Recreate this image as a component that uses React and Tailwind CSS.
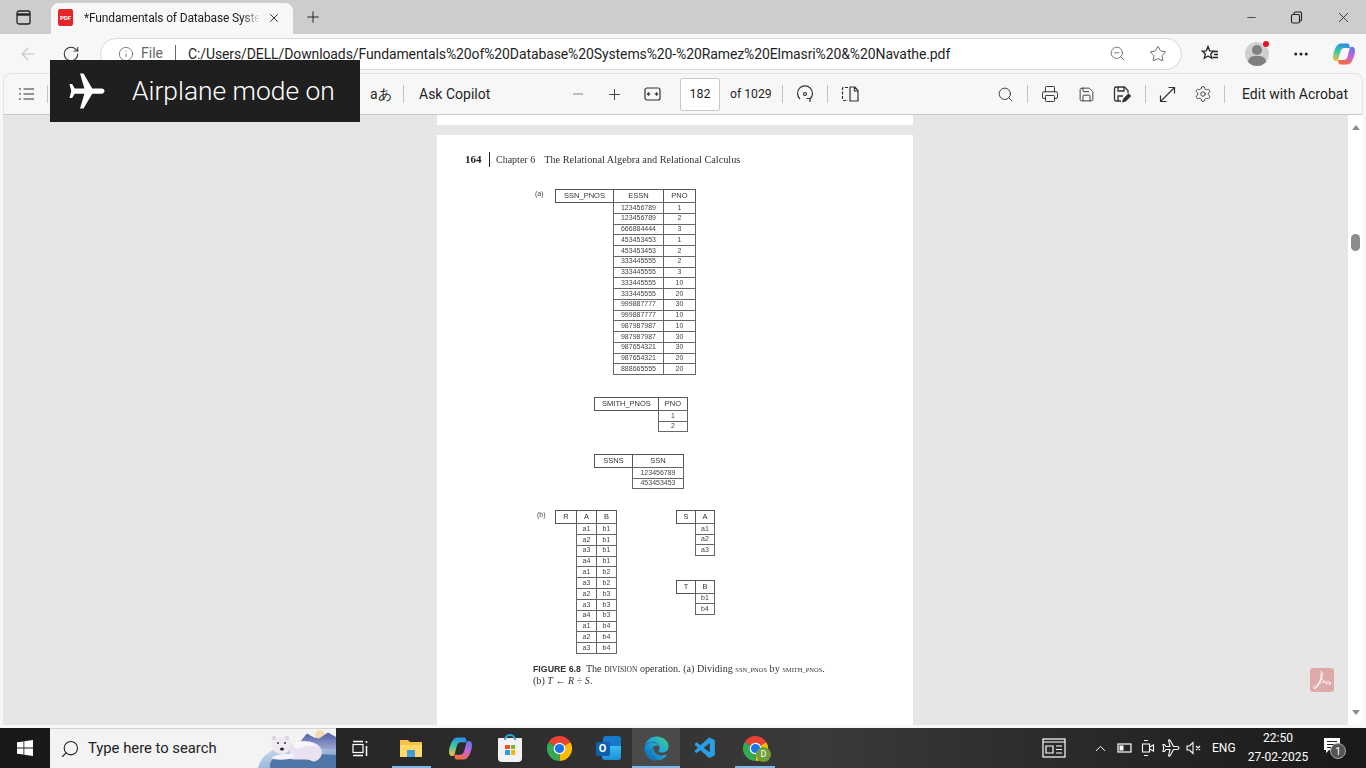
import { ArrowLeft, RotateCw, Info, ZoomOut, Star, Minus, Plus, Search, Printer, Save, Settings, X, ChevronUp, MoreHorizontal } from 'lucide-react';
import { MdAirplanemodeActive } from 'react-icons/md';
import { SiAdobeacrobatreader } from 'react-icons/si';
import { FaEdge } from 'react-icons/fa';
import { VscVscode } from 'react-icons/vsc';

const Sep = ({ className = '' }) => <div className={`w-px h-[18px] bg-[#c4c4c4] shrink-0 ${className}`}></div>;

const ChromeLogo = ({ size = 24 }) => (
  <svg width={size} height={size} viewBox="0 0 24 24">
    <path d="M12 12L1.6 6A12 12 0 0 1 22.4 6Z" fill="#ea4335" />
    <path d="M12 12L22.4 6A12 12 0 0 1 12 24Z" fill="#fbbc04" />
    <path d="M12 12L12 24A12 12 0 0 1 1.6 6Z" fill="#34a853" />
    <circle cx="12" cy="12" r="5.6" fill="#fff" />
    <circle cx="12" cy="12" r="4.4" fill="#1a73e8" />
  </svg>
);

const CopilotLogo = ({ size = 24 }) => (
  <svg width={size} height={size} viewBox="0 0 24 24">
    <defs>
      <linearGradient id="copA" x1="0.5" y1="0" x2="0.3" y2="1">
        <stop offset="0" stopColor="#2d8ee8" />
        <stop offset="0.5" stopColor="#3ec9a0" />
        <stop offset="1" stopColor="#f2c23e" />
      </linearGradient>
      <linearGradient id="copB" x1="0.7" y1="0" x2="0.4" y2="1">
        <stop offset="0" stopColor="#5f7be8" />
        <stop offset="0.5" stopColor="#c860d8" />
        <stop offset="1" stopColor="#f4703a" />
      </linearGradient>
    </defs>
    <path d="M9 1.500h6.500c1 0 1.600.6 1.900 1.500L18 6h-5.500C10 6 9 7.500 8.300 10L6.500 17c-.4 1.500-1.300 2.200-2.500 2.200-2 0-3-1.600-3-4.200 0-2.600 1-6 2.400-9C5 3 6.600 1.500 9 1.500z" fill="url(#copA)" />
    <path d="M15 22.500H8.500c-1 0-1.600-.6-1.900-1.500L6 18h5.500c2.500 0 3.500-1.500 4.200-4l1.800-7c.4-1.500 1.300-2.200 2.500-2.200 2 0 3 1.600 3 4.200 0 2.600-1 6-2.400 9-1.600 3-3.200 4.500-5.600 4.500z" fill="url(#copB)" />
  </svg>
);

const BearArt = () => (
  <svg width="78" height="40" viewBox="0 0 78 40" className="shrink-0">
    <defs>
      <linearGradient id="mountain" x1="0" y1="0" x2="0" y2="1">
        <stop offset="0" stopColor="#4f5ea6" />
        <stop offset="1" stopColor="#aeb6dc" />
      </linearGradient>
      <linearGradient id="hill" x1="0" y1="0" x2="1" y2="1">
        <stop offset="0" stopColor="#d5e3f2" />
        <stop offset="1" stopColor="#6b8fc4" />
      </linearGradient>
    </defs>
    <circle cx="62" cy="6" r="5" fill="#f3d9b0" />
    <path d="M36 20L49 4.500l7 4 5 1 9-6L78 8v16H36z" fill="url(#mountain)" />
    <path d="M0 40c1-9 8-17 20-21 16-2 40 0 58 2v19z" fill="url(#hill)" />
    <path d="M12 38c-1-7 6-12 16-13 16-1 34 0 50 1v14H16c-2 0-4-1-4-2z" fill="#4f76a8" />
    <path d="M32 14c8-3 22-3 28 2 5 4 5 10 1 14-3 3-7 3-9 1-6-1-14 0-20-1z" fill="#e9e2f0" />
    <path d="M34 14c8-2 20-2 26 3-6-1-16 0-22 3z" fill="#f8f5fb" />
    <path d="M14 16c0-5 4-8 9-8 6 0 10 3 10 8s-4 9-9 9c-6 0-10-4-10-9z" fill="#efe9f5" />
    <circle cx="16" cy="9" r="2.200" fill="#ddd4e6" />
    <circle cx="29" cy="9" r="2.200" fill="#ddd4e6" />
    <circle cx="20" cy="14" r="0.900" fill="#222" />
    <circle cx="27" cy="14" r="0.900" fill="#222" />
    <ellipse cx="24" cy="20" rx="2" ry="1.500" fill="#222" />
    <path d="M14 28c6-3 14-4 22-3l-1 4c-6 2-14 2-20 1z" fill="#f6f2fa" />
  </svg>
);

const ToolIcon = ({ className = '', children }) => (
  <div className={`w-9 h-full shrink-0 flex items-center justify-center text-[#333] ${className}`}>{children}</div>
);

const Relation = ({ name, nameW, cols, rows, rowClass }) => (
  <div className="flex flex-col text-[#333]">
    <div className="flex h-[14px] text-[7.5px]">
      <div className={`${nameW} h-full border border-[#555] flex items-center justify-center`}>{name}</div>
      {cols.map((col) => (
        <div key={col.label} className={`${col.w} h-full -ml-px border border-[#555] flex items-center justify-center`}>{col.label}</div>
      ))}
    </div>
    {rows.map((row, i) => (
      <div key={i} className={`flex -mt-px text-[7px] text-[#444] ${rowClass}`}>
        <div className={`${nameW} shrink-0`}></div>
        {cols.map((col, j) => (
          <div key={col.label} className={`${col.w} h-full -ml-px border border-[#666] flex items-center justify-center`}>{row[j]}</div>
        ))}
      </div>
    ))}
  </div>
);

const essnRows = [
  ['123456789', '1'], ['123456789', '2'], ['666884444', '3'], ['453453453', '1'],
  ['453453453', '2'], ['333445555', '2'], ['333445555', '3'], ['333445555', '10'],
  ['333445555', '20'], ['999887777', '30'], ['999887777', '10'], ['987987987', '10'],
  ['987987987', '30'], ['987654321', '30'], ['987654321', '20'], ['888665555', '20'],
];

const abRows = [
  ['a1', 'b1'], ['a2', 'b1'], ['a3', 'b1'], ['a4', 'b1'], ['a1', 'b2'], ['a3', 'b2'],
  ['a2', 'b3'], ['a3', 'b3'], ['a4', 'b3'], ['a1', 'b4'], ['a2', 'b4'], ['a3', 'b4'],
];

const PdfPage = () => (
  <div className="w-[476px] h-[590px] mt-[10px] ml-[434px] bg-white pt-[18px] shrink-0 blur-[0.35px] font-['Liberation_Sans',sans-serif]">
    {/* Running head */}
    <div className="flex items-center h-[13px] pl-[28px] font-['Liberation_Serif',serif] text-[#333]">
      <span className="text-[11px] font-bold w-[24px] text-[#222]">164</span>
      <span className="w-px h-[15px] bg-[#222]"></span>
      <span className="text-[10px] ml-[6px]">Chapter 6</span>
      <span className="text-[10.25px] ml-[9px]">The Relational Algebra and Relational Calculus</span>
    </div>

    {/* (a) */}
    <div className="flex mt-[23px] ml-[98px]">
      <span className="w-[20px] text-[7px] text-[#444]">(a)</span>
      <Relation
        name="SSN_PNOS"
        nameW="w-[59px]"
        cols={[{ label: 'ESSN', w: 'w-[51px]' }, { label: 'PNO', w: 'w-[33px]' }]}
        rows={essnRows}
        rowClass="h-[11.75px]"
      />
    </div>
    <div className="mt-[22px] ml-[157px]">
      <Relation
        name="SMITH_PNOS"
        nameW="w-[65px]"
        cols={[{ label: 'PNO', w: 'w-[30px]' }]}
        rows={[['1'], ['2']]}
        rowClass="h-[11.5px]"
      />
    </div>
    <div className="mt-[22px] ml-[157px]">
      <Relation
        name="SSNS"
        nameW="w-[39px]"
        cols={[{ label: 'SSN', w: 'w-[52px]' }]}
        rows={[['123456789'], ['453453453']]}
        rowClass="h-[11.5px]"
      />
    </div>

    {/* (b) */}
    <div className="flex mt-[21px] ml-[100px]">
      <span className="w-[18px] text-[7px] text-[#444]">(b)</span>
      <Relation
        name="R"
        nameW="w-[22px]"
        cols={[{ label: 'A', w: 'w-[21px]' }, { label: 'B', w: 'w-[21px]' }]}
        rows={abRows}
        rowClass="h-[11.85px]"
      />
      <div className="ml-[59px] flex flex-col gap-[24px]">
        <Relation
          name="S"
          nameW="w-[20px]"
          cols={[{ label: 'A', w: 'w-[20px]' }]}
          rows={[['a1'], ['a2'], ['a3']]}
          rowClass="h-[11.5px]"
        />
        <Relation
          name="T"
          nameW="w-[20px]"
          cols={[{ label: 'B', w: 'w-[20px]' }]}
          rows={[['b1'], ['b4']]}
          rowClass="h-[11.5px]"
        />
      </div>
    </div>

    {/* Caption */}
    <div className="mt-[10px] ml-[96px] font-['Liberation_Serif',serif] text-[10.1px] leading-[10.5px] text-[#333]">
      <p>
        <span className="font-['Liberation_Sans',sans-serif] font-bold text-[8.8px]">FIGURE 6.8</span>
        <span className="ml-[5px]">The </span>
        <span className="text-[7.5px]">DIVISION</span> operation. (a) Dividing <span className="text-[6.5px]">SSN_PNOS</span> by <span className="text-[6.5px]">SMITH_PNOS</span>.
      </p>
      <p>(b) <i>T</i> ← <i>R</i> ÷ <i>S</i>.</p>
    </div>
  </div>
);

const App = () => {
  return (
    <div className="relative w-[1366px] h-[768px] overflow-hidden flex flex-col bg-[#f7f7f7] font-['Roboto',sans-serif] text-[#1f1f1f]">
      {/* Title bar */}
      <div className="h-[34px] bg-[#cdcdcd] flex items-end shrink-0">
        <div className="w-[38px] h-full flex items-center justify-center pl-[9px]">
          <svg width="15" height="15" viewBox="0 0 15 15" fill="none" stroke="#222" strokeWidth="1.3">
            <rect x="1" y="1" width="13" height="13" rx="2" />
            <path d="M1 4.500h13" strokeWidth="2.400" />
          </svg>
        </div>
        <div className="w-[242px] h-[31px] ml-[13px] bg-[#f7f7f7] rounded-t-lg flex items-center pl-[7px] pb-[2px] text-[12px]">
          <div className="w-[15px] h-[17px] rounded-[2px] bg-[#e5252a] flex items-center justify-center text-white text-[6px] font-bold">PDF</div>
          <span className="ml-[11px] w-[176px] whitespace-nowrap tracking-[-0.15px] [mask-image:linear-gradient(to_right,black_90%,transparent)]">*Fundamentals of Database Syste</span>
          <X size={14} strokeWidth={1.5} className="ml-[7px]" />
        </div>
        <div className="h-full flex items-center ml-[11px] text-[#222]">
          <Plus size={18} strokeWidth={1.3} />
        </div>
        <div className="ml-auto h-full flex items-center gap-[32px] pr-[14px] text-[#222]">
          <Minus size={13} strokeWidth={1.4} />
          <svg width="13" height="13" viewBox="0 0 13 13" fill="none" stroke="#222" strokeWidth="1.1">
            <rect x="1.500" y="3.500" width="8" height="8.500" rx="1.500" />
            <path d="M4 3.500V2.500a1.500 1.500 0 0 1 1.500-1.500h4A1.500 1.500 0 0 1 11.500 2.500v6A1.500 1.500 0 0 1 9.500 10" />
          </svg>
          <X size={17} strokeWidth={1.2} />
        </div>
      </div>

      {/* Address row */}
      <div className="h-[39px] flex items-center shrink-0">
        <ArrowLeft size={20} strokeWidth={1.3} className="ml-[18px] text-[#c0c0c0]" />
        <RotateCw size={18} strokeWidth={1.4} className="ml-[24px] text-[#333]" />
        <div className="ml-[20px] w-[1082px] h-[32px] bg-white rounded-full border border-[#d8d8d8] flex items-center pl-[17px] text-[14px]">
          <Info size={16} strokeWidth={1.2} className="text-[#666]" />
          <span className="ml-[7px] text-[#666]">File</span>
          <span className="w-px h-[18px] bg-[#666] ml-[12px]"></span>
          <span className="ml-[12px] w-[768px] whitespace-nowrap tracking-[-0.11px] pt-[2px]">C:/Users/DELL/Downloads/Fundamentals%20of%20Database%20Systems%20-%20Ramez%20Elmasri%20&amp;%20Navathe.pdf</span>
          <ZoomOut size={17} strokeWidth={1.2} className="ml-[153px] text-[#666]" />
          <Star size={18} strokeWidth={1.2} className="ml-[23px] text-[#555]" />
        </div>
        <div className="ml-[18px] w-[20px] text-[#222]">
          <svg width="20" height="20" viewBox="0 0 20 20" fill="none" stroke="#222" strokeWidth="1.300">
            <path d="M8 2.500l1.700 4.300 4 .3-3 2.800 1 4.300-3.700-2.300-3.700 2.300 1-4.300-3-2.800 4-.3z" />
            <path d="M14 7.500h4M14 10.500h4M12.500 13.500h5.500" />
          </svg>
        </div>
        <div className="relative ml-[25px] w-[24px] h-[24px] rounded-full bg-[#cfcfcf] overflow-hidden">
          <div className="w-[10px] h-[10px] rounded-full bg-[#808080] mx-auto mt-[3px]"></div>
          <div className="w-[18px] h-[12px] rounded-full bg-[#808080] mx-auto mt-[1px]"></div>
        </div>
        <div className="w-[6px] h-[6px] rounded-full bg-[#e81123] -ml-[6px] -mt-[20px] z-10"></div>
        <MoreHorizontal size={18} className="ml-[23px] text-[#222]" />
        <div className="ml-[22px]">
          <CopilotLogo size={24} />
        </div>
      </div>

      {/* PDF viewer frame */}
      <div className="flex-1 min-h-0 mx-[3px] flex flex-col">
        <div className="h-[42px] bg-[#f7f7f7] rounded-t-lg border border-[#e4e4e4] border-b-[#c8c8c8] flex items-center text-[14px] shrink-0">
          <ToolIcon className="ml-[5px]">
            <svg width="18" height="14" viewBox="0 0 18 14" fill="none" stroke="#333" strokeWidth="1.2">
              <path d="M1 2h2M1 7h2M1 12h2M5.500 2H16M5.500 7H16M5.500 12H16" />
            </svg>
          </ToolIcon>
          <Sep className="ml-[2px]" />
          <div className="w-[307px] shrink-0"></div>
          <Sep />
          <span className="ml-[14px] w-[24px]">aあ</span>
          <Sep className="ml-[9px]" />
          <span className="ml-[15px] w-[72px] whitespace-nowrap">Ask Copilot</span>
          <ToolIcon className="ml-[69px] text-[#777]"><Minus size={16} strokeWidth={1.3} /></ToolIcon>
          <ToolIcon><Plus size={17} strokeWidth={1.3} /></ToolIcon>
          <ToolIcon className="ml-[2px]">
            <svg width="17" height="14" viewBox="0 0 17 14" fill="none" stroke="#333" strokeWidth="1.2">
              <rect x="1" y="1" width="15" height="12" rx="2" />
              <path d="M3.500 7h3M5 5.500L3.500 7 5 8.500M13.500 7h-3M12 5.500l1.500 1.500L12 8.500" />
            </svg>
          </ToolIcon>
          <div className="ml-[10px] w-[40px] h-[33px] bg-white border border-[#c8c8c8] rounded-[2px] flex items-center justify-center text-[12.5px]">182</div>
          <span className="ml-[10px] w-[42px] whitespace-nowrap text-[12.2px]">of 1029</span>
          <Sep className="ml-[10px]" />
          <ToolIcon className="ml-[4px]">
            <svg width="18" height="20" viewBox="0 0 18 20" fill="none" stroke="#333" strokeWidth="1.2">
              <path d="M4 15a7.500 7.500 0 1 1 10 0" />
              <path d="M14 18.500V15h-3.500" transform="translate(0 -0.5)" />
              <circle cx="9" cy="10" r="1.500" />
            </svg>
          </ToolIcon>
          <Sep className="ml-[4px]" />
          <ToolIcon className="ml-[4px]">
            <svg width="18" height="16" viewBox="0 0 18 16" fill="none" stroke="#333" strokeWidth="1.2">
              <path d="M7 1.500H2.500a1 1 0 0 0-1 1v11a1 1 0 0 0 1 1H7" strokeDasharray="3 1.500" />
              <path d="M9 1h5l3 3.500V15H9zM9 15V1M13.500 1v4H17" />
            </svg>
          </ToolIcon>
          <div className="w-[119px] shrink-0"></div>
          <ToolIcon><Search size={17} strokeWidth={1.3} /></ToolIcon>
          <Sep className="ml-[4px]" />
          <ToolIcon className="ml-[4px]"><Printer size={18} strokeWidth={1.3} /></ToolIcon>
          <ToolIcon><Save size={17} strokeWidth={1.3} /></ToolIcon>
          <ToolIcon>
            <svg width="18" height="18" viewBox="0 0 18 18" fill="none" stroke="#333" strokeWidth="1.3">
              <path d="M8 16H3a1.500 1.500 0 0 1-1.500-1.500v-11A1.500 1.500 0 0 1 3 2h8.500L15 5.500V8" />
              <path d="M5 2v4h6V2M5 16v-5h5" />
              <path d="M10 16.500l.7-2.500 4.800-4.800 1.800 1.800-4.800 4.800z" fill="#333" />
            </svg>
          </ToolIcon>
          <Sep className="ml-[5px]" />
          <ToolIcon className="ml-[3px]">
            <svg width="17" height="17" viewBox="0 0 17 17" fill="none" stroke="#333" strokeWidth="1.2">
              <path d="M1.500 15.500l14-14M9.500 1.500h6v6M1.500 9.500v6h6" />
            </svg>
          </ToolIcon>
          <ToolIcon><Settings size={18} strokeWidth={1.2} /></ToolIcon>
          <Sep className="ml-[3px]" />
          <span className="ml-[17px] whitespace-nowrap">Edit with Acrobat</span>
        </div>

        {/* Document area */}
        <div className="flex-1 min-h-0 flex relative">
          <div className="flex-1 min-w-0 bg-[#e6e6e6] overflow-hidden">
            <div className="w-[476px] h-[10px] ml-[434px] bg-white"></div>
            <PdfPage />
          </div>
          <div className="w-[15px] bg-white rounded-br-lg flex flex-col items-center relative shrink-0">
            <div className="mt-[10px] w-0 h-0 border-x-[4.5px] border-x-transparent border-b-[5px] border-b-[#8c8c8c]"></div>
            <div className="mt-[104px] w-[9px] h-[17px] rounded-full bg-[#8c8c8c]"></div>
            <div className="mt-auto mb-[10px] w-0 h-0 border-x-[4.5px] border-x-transparent border-t-[5px] border-t-[#8c8c8c]"></div>
          </div>
          <div className="absolute left-[1307px] top-[553px] w-[24px] h-[24px] rounded-[3px] bg-[#dfa9a9] flex items-center justify-center text-white">
            <SiAdobeacrobatreader size={18} />
          </div>
        </div>
      </div>
      <div className="h-[3px] shrink-0"></div>

      {/* Taskbar */}
      <div className="h-[40px] shrink-0 flex items-center text-white bg-gradient-to-r from-[#191919] via-[#3a3a3a] via-60% to-[#191919]">
        <div className="w-[50px] h-full flex items-center justify-center bg-[#191919]">
          <svg width="16" height="16" viewBox="0 0 16 16" fill="#fff">
            <path d="M0 2.300l6.500-.9v6.200H0zM7.300 1.300L16 0v7.600H7.300zM0 8.400h6.500v6.200L0 13.700zM7.300 8.400H16V16l-8.700-1.200z" />
          </svg>
        </div>
        <div className="w-[286px] h-full bg-[#f3f3f3] border-t border-[#d0d0d0] flex items-center text-[#222] text-[14.8px]">
          <Search size={20} strokeWidth={1.3} className="ml-[10px] -scale-x-100" />
          <span className="ml-[8px] w-[130px] whitespace-nowrap">Type here to search</span>
          <div className="ml-auto"><BearArt /></div>
        </div>
        <div className="w-[48px] h-full flex items-center justify-center">
          <svg width="17" height="17" viewBox="0 0 17 17" fill="none" stroke="#fff" strokeWidth="1.2">
            <rect x="1" y="4.500" width="10" height="8" />
            <path d="M1 1.500h10M1 15.500h10M14.500 1v2M14.500 6v10" strokeWidth="1.500" />
          </svg>
        </div>
        <div className="w-[50px] h-full flex items-center justify-center relative ml-[2px]">
          <svg width="24" height="22" viewBox="0 0 24 22">
            <path d="M1 3h8l2 2h12v15H1z" fill="#f6c344" />
            <path d="M1 8h22v12H1z" fill="#ffd968" />
            <path d="M8 13h8v7H8z" fill="#3f9ad8" />
          </svg>
          <div className="absolute bottom-0 left-[6px] w-[39px] h-[2px] bg-[#76b9ed]"></div>
        </div>
        <div className="w-[49px] h-full flex items-center justify-center"><CopilotLogo size={25} /></div>
        <div className="w-[50px] h-full flex items-center justify-center">
          <div className="relative w-[24px] h-[24px] bg-[#f2f2f2] rounded-b-[4px] rounded-t-[1px] mt-[3px] grid grid-cols-2 gap-px p-[7px]">
            <div className="absolute -top-[4px] left-[6px] w-[12px] h-[6px] border-2 border-b-0 border-[#2aa7d8] rounded-t-md"></div>
            <div className="bg-[#e8512a]"></div>
            <div className="bg-[#7cb82f]"></div>
            <div className="bg-[#2a9fe0]"></div>
            <div className="bg-[#f4b400]"></div>
          </div>
        </div>
        <div className="w-[49px] h-full flex items-center justify-center"><ChromeLogo size={25} /></div>
        <div className="w-[48px] h-full flex items-center justify-center">
          <div className="relative w-[25px] h-[24px]">
            <div className="absolute right-0 top-0 w-[18px] h-[13px] rounded-t-[3px] bg-[#1678c8]"></div>
            <div className="absolute right-0 top-[10px] w-[19px] h-[14px] rounded-b-[3px] bg-gradient-to-b from-[#36bdf0] to-[#1d8fd8]"></div>
            <div className="absolute left-0 top-[6px] w-[14px] h-[14px] rounded-[2px] bg-[#0f5fb0] flex items-center justify-center text-[11px] font-bold">O</div>
          </div>
        </div>
        <div className="relative w-[48px] h-full bg-[#4a4a4a] flex items-center justify-center">
          <svg width="0" height="0" className="absolute">
            <defs>
              <linearGradient id="edgeFill" x1="1" y1="0" x2="0" y2="1">
                <stop offset="0" stopColor="#47d07a" />
                <stop offset="0.45" stopColor="#1ea8d8" />
                <stop offset="1" stopColor="#0b5fb5" />
              </linearGradient>
            </defs>
          </svg>
          <FaEdge size={25} fill="url(#edgeFill)" />
          <div className="absolute bottom-0 left-0 right-0 h-[2px] bg-[#76b9ed]"></div>
        </div>
        <div className="w-[50px] h-full flex items-center justify-center">
          <VscVscode size={25} className="text-[#2a9fe6]" />
        </div>
        <div className="relative w-[50px] h-full flex items-center justify-center">
          <ChromeLogo size={25} />
          <div className="absolute right-[9px] bottom-[6px] w-[15px] h-[15px] rounded-full bg-[#6f9f3c] flex items-center justify-center text-[9px]">D</div>
          <div className="absolute bottom-0 left-[5px] w-[40px] h-[2px] bg-[#76b9ed]"></div>
        </div>

        {/* Tray */}
        <div className="ml-auto h-full flex items-center pr-[24px]">
          <svg width="24" height="20" viewBox="0 0 24 20" fill="none" stroke="#fff" strokeWidth="1.2">
            <rect x="1" y="1" width="22" height="18" />
            <path d="M1 4h22M4 8h7v7H4zM14 8h6M14 11.500h6M14 15h6" />
          </svg>
          <ChevronUp size={17} strokeWidth={1.4} className="ml-[26px]" />
          <svg width="16" height="12" viewBox="0 0 16 12" fill="none" stroke="#fff" strokeWidth="1.2" className="ml-[8px]">
            <rect x="1" y="2" width="13" height="8" />
            <rect x="2.500" y="3.500" width="4" height="5" fill="#fff" stroke="none" />
          </svg>
          <svg width="14" height="20" viewBox="0 0 14 20" fill="none" stroke="#fff" strokeWidth="1.1" className="ml-[8px]">
            <path d="M3 2.500h4M3 17.500h4M1.500 6v8h7V6zM8.500 9l4-2v6l-4-2" />
          </svg>
          <svg width="18" height="18" viewBox="0 0 18 18" fill="none" stroke="#fff" strokeWidth="1.1" className="ml-[7px]">
            <path d="M17 9c0-1-1-1.500-2-1.500h-3.500L8 1H6.500l1.500 6.500H4L2.500 5.500H1l.7 3.500L1 12.500h1.500L4 10.500h4L6.500 17H8l3.500-6.500H15c1 0 2-.5 2-1.500z" />
          </svg>
          <svg width="15" height="14" viewBox="0 0 15 14" fill="none" stroke="#fff" strokeWidth="1.1" className="ml-[6px]">
            <path d="M1 5v4h2.500L7 12.500v-11L3.500 5zM10 5l4 4M14 5l-4 4" />
          </svg>
          <span className="ml-[11px] w-[24px] text-[12px]">ENG</span>
          <div className="ml-[12px] w-[60px] flex flex-col items-center text-[12px] leading-[19px] whitespace-nowrap">
            <span>22:50</span>
            <span>27-02-2025</span>
          </div>
          <div className="relative ml-[16px] w-[18px] h-[20px]">
            <svg width="16" height="16" viewBox="0 0 16 16" fill="#fff">
              <path d="M0 0h16v12H5l-3 3v-3H0z" />
              <path d="M3 3.500h10M3 6.500h10M3 9.500h6" stroke="#222" strokeWidth="1" />
            </svg>
            <div className="absolute left-[6px] top-[5px] w-[16px] h-[16px] rounded-full bg-[#555] border border-[#aaa] flex items-center justify-center text-[10px]">1</div>
          </div>
        </div>
      </div>

      {/* Airplane mode flyout */}
      <div className="absolute left-[50px] top-[60px] w-[310px] h-[62px] bg-[#1f1f1f] flex items-center text-white">
        <MdAirplanemodeActive size={42} className="ml-[16px] rotate-90" />
        <span className="ml-[24px] pt-[2px] text-[26.4px] font-light whitespace-nowrap">Airplane mode on</span>
      </div>
    </div>
  );
};

export default App;
